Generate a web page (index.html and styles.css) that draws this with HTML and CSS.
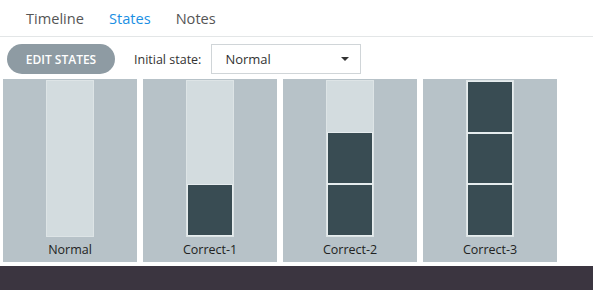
FILE: index.html
```
<!DOCTYPE html>
<html>
<head>
	<meta charset="utf-8">
	<link rel="stylesheet" href="styles.css">
</head>
<body>
	<ul class="tabs">
		<li>Timeline</li>
		<li class="active">States</li>
		<li>Notes</li>
	</ul>
	<div class="toolbar">
		<button class="edit_btn">EDIT STATES</button>
		<span class="init_label">Initial state:</span>
		<div class="select">
			<span>Normal</span>
			<span class="arrow"></span>
		</div>
	</div>
	<div class="states">
		<div class="state">
			<div class="bar"></div>
			<div class="name">Normal</div>
		</div>
		<div class="state">
			<div class="bar">
				<div class="seg"></div>
			</div>
			<div class="name">Correct-1</div>
		</div>
		<div class="state">
			<div class="bar">
				<div class="seg"></div>
				<div class="seg"></div>
			</div>
			<div class="name">Correct-2</div>
		</div>
		<div class="state">
			<div class="bar">
				<div class="seg"></div>
				<div class="seg"></div>
				<div class="seg"></div>
			</div>
			<div class="name">Correct-3</div>
		</div>
	</div>
	<div class="footer"></div>
</body>
</html>
```
FILE: styles.css
```
body
{
	margin:0;
	font-family:"Open Sans","Noto Sans",sans-serif;
	color:#333;
	background:#fff;
}

/* tabs */
.tabs
{
	display:flex;
	gap:25px;
	margin:0;
	padding:0 0 0 26px;
	height:36px;
	list-style-type:none;
	border-bottom:1px solid #e3e6e7;
	align-items:center;
	font-size:14.6px;
	color:#555;
}
.tabs li.active
{
	color:#1a8fe3;
}

/* toolbar */
.toolbar
{
	display:flex;
	align-items:center;
	height:30px;
	margin-top:7px;
	padding-left:7px;
}
.edit_btn
{
	width:108px;
	height:30px;
	border:none;
	border-radius:15px;
	background:#8e9ba3;
	color:#fff;
	font-family:inherit;
	font-size:12px;
	font-weight:600;
	padding:0;
}
.init_label
{
	margin-left:19px;
	font-size:12.5px;
	color:#333;
}
.select
{
	display:flex;
	align-items:center;
	justify-content:space-between;
	box-sizing:border-box;
	width:150px;
	height:30px;
	margin-left:10px;
	padding:0 11px 0 13px;
	border:1px solid #d0d5d8;
	font-size:13px;
	color:#333;
}
.arrow
{
	width:0;
	height:0;
	border-left:4px solid transparent;
	border-right:4px solid transparent;
	border-top:4px solid #333;
}

/* state cards */
.states
{
	display:flex;
	gap:6px;
	margin-top:5px;
	padding-left:3px;
}
.state
{
	width:134px;
	height:183px;
	background:#b7c2c8;
	display:flex;
	flex-direction:column;
	align-items:center;
	padding-top:1px;
	box-sizing:border-box;
}
.bar
{
	width:48px;
	height:157px;
	box-sizing:border-box;
	background:#d3dcdf;
	border:1px solid #dde4e6;
	display:flex;
	flex-direction:column-reverse;
}
.seg
{
	height:52px;
	box-sizing:border-box;
	background:#394c53;
	border:1px solid #e6ecee;
}
.name
{
	flex:1;
	display:flex;
	align-items:center;
	font-size:12.5px;
	color:#222;
}

.footer
{
	margin-top:4px;
	height:24px;
	background:#3b3540;
}
```
